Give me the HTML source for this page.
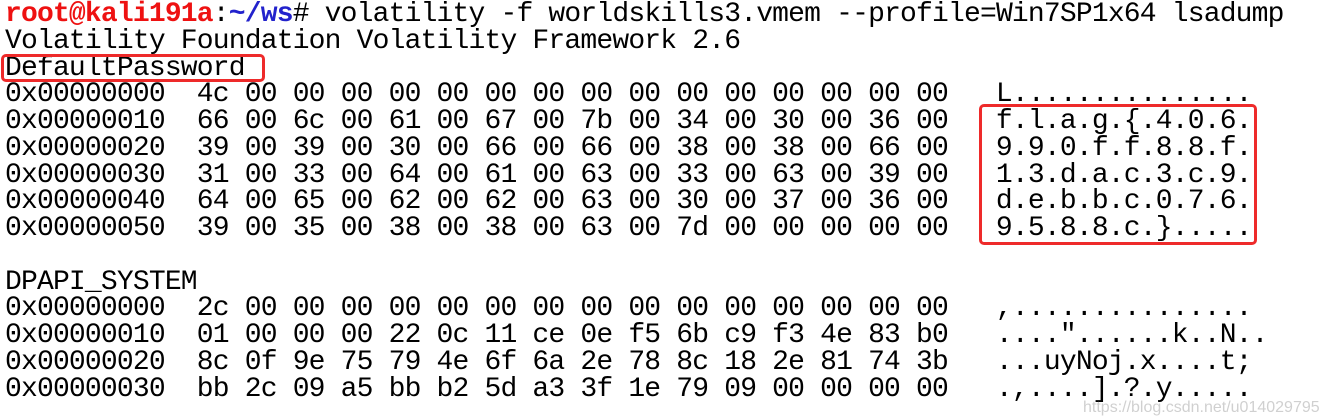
<!DOCTYPE html>
<html><head><meta charset="utf-8"><style>
html,body{margin:0;padding:0;background:#fff;width:1326px;height:419px;overflow:hidden}
pre{margin:0;position:absolute;left:5px;top:2px;font-family:"Liberation Mono",monospace;font-size:28px;letter-spacing:-0.82px;line-height:26.75px;color:#000}
.r{color:#ee1111;font-weight:bold}.b{color:#2222cc;font-weight:bold}
.box{position:absolute;border:3px solid #ee2a2a;border-radius:5px;box-sizing:border-box}
.wm{position:absolute;left:1083px;top:399px;font-family:"Liberation Sans",sans-serif;font-size:16px;color:rgba(170,170,170,0.55);white-space:nowrap}
</style></head><body>
<pre><span class="r">root@kali191a</span>:<span class="b">~/ws</span># volatility -f worldskills3.vmem --profile=Win7SP1x64 lsadump
Volatility Foundation Volatility Framework 2.6
DefaultPassword
0x00000000  4c 00 00 00 00 00 00 00 00 00 00 00 00 00 00 00   L...............
0x00000010  66 00 6c 00 61 00 67 00 7b 00 34 00 30 00 36 00   f.l.a.g.{.4.0.6.
0x00000020  39 00 39 00 30 00 66 00 66 00 38 00 38 00 66 00   9.9.0.f.f.8.8.f.
0x00000030  31 00 33 00 64 00 61 00 63 00 33 00 63 00 39 00   1.3.d.a.c.3.c.9.
0x00000040  64 00 65 00 62 00 62 00 63 00 30 00 37 00 36 00   d.e.b.b.c.0.7.6.
0x00000050  39 00 35 00 38 00 38 00 63 00 7d 00 00 00 00 00   9.5.8.8.c.}.....

DPAPI_SYSTEM
0x00000000  2c 00 00 00 00 00 00 00 00 00 00 00 00 00 00 00   ,...............
0x00000010  01 00 00 00 22 0c 11 ce 0e f5 6b c9 f3 4e 83 b0   ...."......k..N..
0x00000020  8c 0f 9e 75 79 4e 6f 6a 2e 78 8c 18 2e 81 74 3b   ...uyNoj.x....t;
0x00000030  bb 2c 09 a5 bb b2 5d a3 3f 1e 79 09 00 00 00 00   .,....].?.y.....</pre>
<div class="box" style="left:1px;top:54px;width:264px;height:28px"></div>
<div class="box" style="left:979px;top:104px;width:278px;height:141px"></div>
<div class="wm">https://blog.csdn.net/u014029795</div>
</body></html>
